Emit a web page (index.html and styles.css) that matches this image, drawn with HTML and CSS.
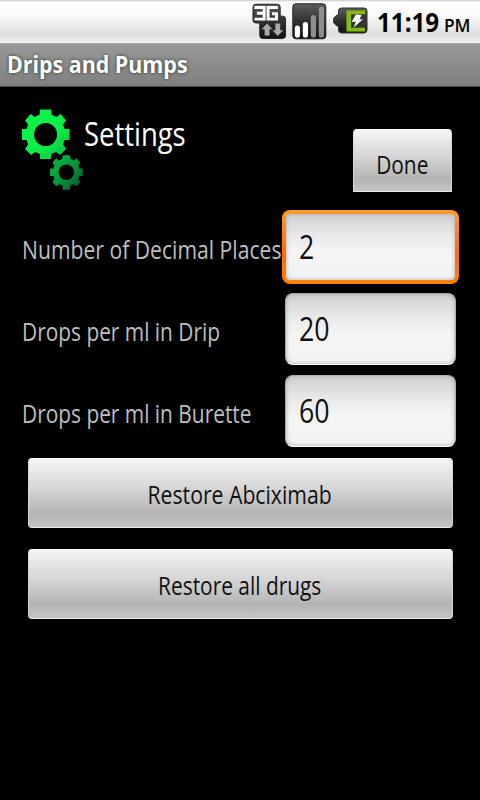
FILE: index.html
```html
<!DOCTYPE html>
<html lang="en">
<head>
<meta charset="utf-8">
<title>Drips and Pumps</title>
<link rel="stylesheet" href="styles.css">
</head>
<body>
<div class="status">
  <svg class="icon-3g" width="35" height="38" viewBox="0 0 36 38">
    <defs><linearGradient id="dark" x1="0" y1="0" x2="0" y2="1"><stop offset="0" stop-color="#5c5c5c"/><stop offset=".5" stop-color="#303030"/><stop offset="1" stop-color="#111"/></linearGradient></defs>
    <path d="M4 .7h22a3 3 0 0 1 3 3V13h2.500a3 3 0 0 1 3 3v17a3 3 0 0 1-3 3H11a3 3 0 0 1-3-3V20H4a3 3 0 0 1-3-3V3.700a3 3 0 0 1 3-3z" fill="url(#dark)" stroke="#222"/>
    <path d="M2.500 4H12.500V16H2.500M5 10h7M26.500 4H16.500V16H25.200V10.500H20.500" fill="none" stroke="#fff" stroke-width="3"/>
    <path d="M15.500 20.500l5.500 6h-3V33h-5v-6.500h-3zM26.500 33.500l-5.500-6h3V20.500h5v7h3z" fill="#aaa"/>
  </svg>
  <svg class="icon-signal" width="35" height="38" viewBox="0 0 35 38">
    <rect x=".8" y=".8" width="33" height="35" rx="3" fill="url(#dark)" stroke="#222"/>
    <g stroke-width="5.200" stroke-linecap="round"><path d="M5.400 25v7M13.400 21.500V32" stroke="#fff"/><path d="M21.400 14.500V32M29.400 6V32" stroke="#8e8e8e"/></g>
  </svg>
  <svg class="icon-battery" width="35" height="28" viewBox="0 0 35 28">
    <path d="M8.500 1H31a3 3 0 0 1 3 3v19a3 3 0 0 1-3 3H8.500a3 3 0 0 1-3-3v-4H4L.7 16V11L4 8h1.500V4a3 3 0 0 1 3-3z" fill="url(#dark)" stroke="#333"/>
    <path d="M13.500 3.500H32v4H18v13h14v4H13.500z" fill="#83bd09"/>
    <path d="M18 7.500h15v13H18z" fill="#353535"/>
    <path d="M23 7.500l5.500.5-2 4.500 3.500-.3-9.500 8.300 2.500-6-4.500.5z" fill="#fff"/>
  </svg>
  <span class="fit time">11:19</span><span class="fit pm">PM</span>
</div>
<div class="titlebar"><span class="fit title">Drips and Pumps</span></div>
<main>
  <header>
    <svg class="gears" width="64" height="84" viewBox="0 0 64 84">
      <defs>
        <linearGradient id="g1" x1="0" y1="0" x2="1" y2="1"><stop offset="0" stop-color="#0bf84b"/><stop offset=".6" stop-color="#0bed48"/><stop offset="1" stop-color="#0ab83e"/></linearGradient>
        <linearGradient id="g2" x1="0" y1="0" x2="1" y2="1"><stop offset="0" stop-color="#0abf40"/><stop offset=".5" stop-color="#08963a"/><stop offset="1" stop-color="#06502e"/></linearGradient>
      </defs>
      <g transform="translate(23.600 25.500)">
        <path fill="url(#g1)" fill-rule="evenodd" d="M-5.500-25H5.500L6-20 11-17.500 15-20.500 20.500-14 17.500-10 19-5.500H24V5.500H19L17.500 10 20.500 14.500 14.500 20.500 10.500 17.500 5.500 19.500V24.500H-5.500V19.500L-10.500 17.500-14.500 20.500-20.500 14.500-17.500 10-19 5.500H-24V-5.500H-19L-17.500-10-20.500-14-15-20.500-11-17.500-6-20zM0-11.500A11.500 11.500 0 1 0 0 11.500 11.500 11.500 0 1 0 0-11.500z"/>
      </g>
      <g transform="translate(44.400 63.300) scale(.68)">
        <path fill="url(#g2)" fill-rule="evenodd" d="M-5.500-25H5.500L6-20 11-17.500 15-20.500 20.500-14 17.500-10 19-5.500H24V5.500H19L17.500 10 20.500 14.500 14.500 20.500 10.500 17.500 5.500 19.500V25.500H-5.500V19.500L-10.500 17.500-14.500 20.500-20.500 14.500-17.500 10-19 5.500H-24V-5.500H-19L-17.500-10-20.500-14-15-20.500-11-17.500-6-20zM0-11.500A11.500 11.500 0 1 0 0 11.500 11.500 11.500 0 1 0 0-11.500z"/>
      </g>
    </svg>
    <h1 class="fit">Settings</h1>
    <button class="done"><span class="fit center">Done</span></button>
  </header>
  <div class="row"><label class="fit l1">Number of Decimal Places</label><div class="field focus"><span class="fit">2</span></div></div>
  <div class="row"><label class="fit l2">Drops per ml in Drip</label><div class="field"><span class="fit">20</span></div></div>
  <div class="row"><label class="fit l3">Drops per ml in Burette</label><div class="field"><span class="fit">60</span></div></div>
  <button class="wide"><span class="fit center abc">Restore Abciximab</span></button>
  <button class="wide"><span class="fit center">Restore all drugs</span></button>
</main>
</body>
</html>
```
FILE: styles.css
```css
* { box-sizing: border-box; }
body {
  margin: 0;
  width: 480px;
  height: 800px;
  overflow: hidden;
  background: #000;
  font-family: "Open Sans", "Noto Sans", sans-serif;
  font-size: 25px;
}
.fit {
  display: block;
  white-space: nowrap;
  transform: scaleX(.835);
  transform-origin: left center;
}
.fit.center { transform-origin: center; }
.fit.abc { transform: scaleX(.848); }
.status {
  display: flex;
  height: 43px;
  padding-left: 252px;
  background: linear-gradient(#c8c8c8 0, #fff 2px, #fafafa 35%, #dedede 80%, #f2f2f2 100%);
  color: #000;
  font-weight: 700;
}
.icon-3g { margin-top: 3px; }
.icon-signal { margin: 3px 0 0 5px; }
.icon-battery { margin: 7px 0 0 6px; }
.status .time { margin-left: 9px; width: 67px; font-size: 26px; line-height: 44px; transform: scaleX(.93); }
.status .pm { font-size: 18px; font-weight: 600; line-height: 50px; transform: scaleX(.96); }
.titlebar {
  height: 44px;
  padding-left: 7px;
  background: linear-gradient(#aaa 0, #989898 2px, #808080 42px, #707070 43px, #333 44px);
  color: #fff;
  font-size: 23px;
  font-weight: 700;
  line-height: 43px;
  text-shadow: 0 0 4px #28382c;
}
.titlebar .title { transform: scaleX(.93); }
main { padding: 20px 21px 0 22px; }
header { display: flex; height: 100px; }
.gears { flex: none; margin-top: 2px; }
h1 {
  margin: 0 0 0 -2px;
  width: 269px;
  color: #fff;
  font-size: 32px;
  font-weight: 400;
  line-height: 54px;
}
h1.fit { transform: scaleX(.857); }
button {
  display: flex;
  justify-content: center;
  border: 1px solid #eee;
  border-color: #fff #d4d4d4 #e8e8e8;
  padding: 0;
  border-radius: 4px;
  background: linear-gradient(#f5f5f5, #d4d4d4 45%, #b4b4b4 80%, #c5c5c5);
  color: #111;
  font: inherit;
}
.done {
  width: 99px;
  height: 63px;
  margin-top: 22px;
  border-radius: 4px 4px 0 0;
  line-height: 69px;
  flex: none;
}
.row { display: flex; justify-content: space-between; height: 82.300px; }
.row label { color: #bebebe; width: 259px; line-height: 84px; }
.row .l1 { transform: scaleX(.846); }
.row .l3 { line-height: 83px; }
.field {
  flex: none;
  width: 171px;
  height: 72px;
  margin: 3.500px 3px 0 0;
  padding-left: 13px;
  border-radius: 8px;
  border: 1px solid #aaa;
  border-bottom-color: #fff;
  background: linear-gradient(#d0d0d0, #ebebeb 35%, #f5f5f5 60%, #f2f2f2);
  box-shadow: inset 0 0 4px #aaa;
  color: #111;
  font-size: 32px;
  line-height: 70px;
}
.focus {
  width: 177px;
  height: 74px;
  margin: 3px 0 0;
  padding-left: 13px;
  border: 4.500px solid transparent;
  background: linear-gradient(#d0d0d0, #ebebeb 35%, #f5f5f5 60%, #f2f2f2) padding-box, linear-gradient(#ff9a2c, #ff6c00 60%, #ff8400) border-box;
  line-height: 66px;
}
.wide { width: 425px; height: 70px; margin: 4.200px 0 21.300px 5.500px; line-height: 70px; }
```
